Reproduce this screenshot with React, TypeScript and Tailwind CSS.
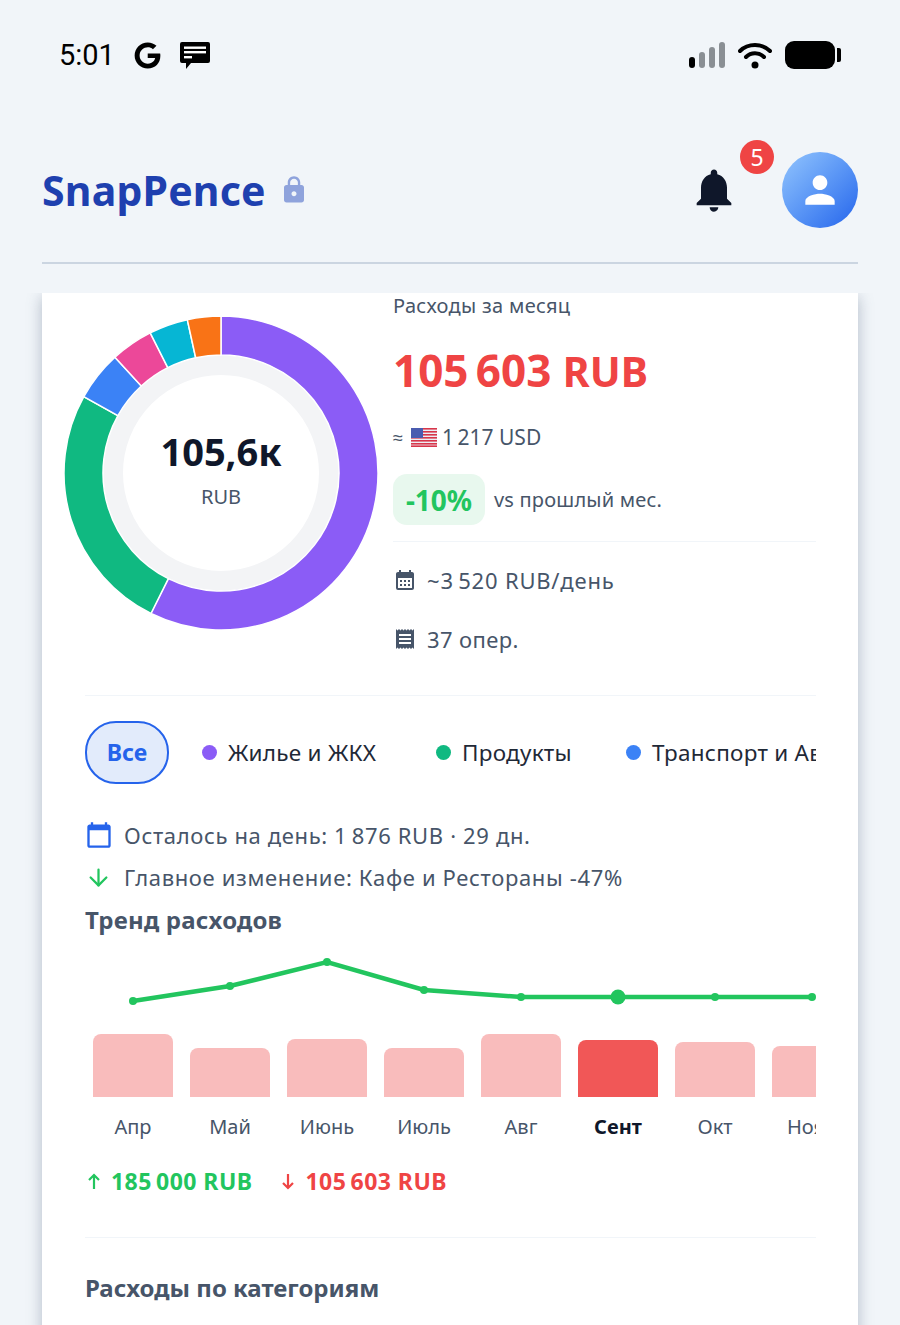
import { MdCalendarMonth, MdCalendarToday, MdLock, MdNotifications, MdPerson, MdReceipt } from "react-icons/md";
import { FaGoogle } from "react-icons/fa";
import { ArrowDown } from "lucide-react";

const segments = [
  { from: 0, to: 206.5, color: "#8b5cf6" },
  { from: 206.5, to: 299.1, color: "#10b981" },
  { from: 299.1, to: 317.5, color: "#3b82f6" },
  { from: 317.5, to: 333.2, color: "#ec4899" },
  { from: 333.2, to: 347.6, color: "#06b6d4" },
  { from: 347.6, to: 360, color: "#f97316" },
];

function polar(r: number, deg: number) {
  const a = (deg * Math.PI) / 180;
  return `${157 + r * Math.sin(a)} ${157 - r * Math.cos(a)}`;
}

function arc(from: number, to: number) {
  const large = to - from > 180 ? 1 : 0;
  return `M${polar(157, from)} A157 157 0 ${large} 1 ${polar(157, to)} L${polar(118, to)} A118 118 0 ${large} 0 ${polar(118, from)} Z`;
}

function Donut() {
  return (
    <div className="relative h-[314px] w-[314px] shrink-0">
      <svg width="314" height="314" viewBox="0 0 314 314">
        <circle cx="157" cy="157" r="108" fill="none" stroke="#f3f4f6" strokeWidth="20" />
        {segments.map((s) => (
          <path key={s.from} d={arc(s.from, s.to)} fill={s.color} stroke="#ffffff" strokeWidth="1.5" />
        ))}
      </svg>
      <div className="absolute inset-0 flex flex-col items-center justify-center pb-[8px]">
        <div className="text-[38px] font-bold leading-[44px] text-[#0f172a]">105,6к</div>
        <div className="mt-[11px] text-[20px] leading-[26px] text-[#475569]">RUB</div>
      </div>
    </div>
  );
}

function Flag() {
  return (
    <svg width="26" height="19" viewBox="0 0 26 19" className="shrink-0">
      <rect width="26" height="19" rx="2" fill="#eceef4" />
      {[0, 3, 6, 9, 12, 15, 17.4].map((y) => (
        <rect key={y} y={y} width="26" height="1.6" fill="#d8364a" />
      ))}
      <rect width="12" height="10" fill="#4a5cb0" />
    </svg>
  );
}

const months = [
  { label: "Апр", height: 63 },
  { label: "Май", height: 49 },
  { label: "Июнь", height: 58 },
  { label: "Июль", height: 49 },
  { label: "Авг", height: 63 },
  { label: "Сент", height: 57, active: true },
  { label: "Окт", height: 55 },
  { label: "Нояб", height: 51 },
];

const points: [number, number][] = [
  [48, 50],
  [145, 35],
  [242, 11],
  [339, 39],
  [436, 46],
  [533, 46],
  [630, 46],
  [727, 46],
];

function Chart() {
  return (
    <div className="overflow-hidden">
      <svg width="731" height="81" viewBox="0 0 731 81" className="block">
        <polyline points={points.map((p) => p.join(",")).join(" ")} fill="none" stroke="#22c55e" strokeWidth="4.5" />
        {points.map((p, i) => (
          <circle key={i} cx={p[0]} cy={p[1]} r={i === 5 ? 7.5 : 4} fill="#22c55e" />
        ))}
      </svg>
      <div className="flex w-[800px] gap-[17px] pl-[8px]">
        {months.map((m) => (
          <div key={m.label} className="flex w-[80px] shrink-0 flex-col items-center">
            <div className="flex h-[65px] w-full items-end">
              <div
                className={m.active ? "w-full rounded-t-[8px] bg-[#f15757]" : "w-full rounded-t-[8px] bg-[#f9bcbc]"}
                style={{ height: m.height }}
              />
            </div>
            <div className={m.active ? "mt-[17px] w-[100px] text-center text-[20px] font-bold leading-[26px] text-[#0f172a]" : "mt-[17px] w-[100px] text-center text-[20px] leading-[26px] text-[#475569]"}>
              {m.label}
            </div>
          </div>
        ))}
      </div>
    </div>
  );
}

function StatusBar() {
  return (
    <div className="flex h-[110px] shrink-0 items-center justify-between pl-[59px] pr-[59px]">
      <div className="flex items-center">
        <span className="font-['Roboto'] text-[29px] leading-none text-black">5:01</span>
        <FaGoogle className="ml-[19px] text-[27px] text-black" />
        <svg width="30" height="27" viewBox="0 0 30 27" className="ml-[19px] mt-[1px]">
          <path d="M2 0 H28 A2 2 0 0 1 30 2 V19 A2 2 0 0 1 28 21 H11 L6 27 V21 H2 A2 2 0 0 1 0 19 V2 A2 2 0 0 1 2 0 Z" fill="#000" />
          <rect x="4" y="4.5" width="22" height="2.4" fill="#fff" />
          <rect x="4" y="9" width="22" height="2.4" fill="#fff" />
          <rect x="4" y="14" width="8" height="2.4" fill="#fff" />
        </svg>
      </div>
      <div className="flex items-center">
        <svg width="36" height="26" viewBox="0 0 36 26">
          <rect x="0" y="15" width="6" height="11" rx="3" fill="#000" />
          <rect x="10" y="10" width="6" height="16" rx="3" fill="#8a8f94" />
          <rect x="20" y="5" width="6" height="21" rx="3" fill="#8a8f94" />
          <rect x="30" y="0" width="6" height="26" rx="3" fill="#8a8f94" />
        </svg>
        <svg width="34" height="27" viewBox="0 0 34 27" className="ml-[13px]">
          <path d="M2 9 C10 1 24 1 32 9" fill="none" stroke="#000" strokeWidth="4" strokeLinecap="round" />
          <path d="M8 15 C13 10 21 10 26 15" fill="none" stroke="#000" strokeWidth="4" strokeLinecap="round" />
          <circle cx="17" cy="23" r="3.5" fill="#000" />
        </svg>
        <div className="ml-[13px] h-[28px] w-[50px] rounded-[9px] bg-black" />
        <div className="ml-[2px] h-[14px] w-[4px] rounded-r-[2px] bg-black" />
      </div>
    </div>
  );
}

function Header() {
  return (
    <div className="mx-[42px] flex h-[154px] shrink-0 items-center justify-between border-b-2 border-[#cbd5e1] pt-[8px]">
      <div className="flex items-center">
        <span className="text-[41px] font-bold leading-none tracking-[0.2px] text-[#1e40af]">SnapPence</span>
        <MdLock className="ml-[13px] text-[30px] text-[#8fa3dc]" />
      </div>
      <div className="flex items-center">
        <div className="relative mr-[42px]">
          <MdNotifications className="text-[52px] text-[#0f172a]" />
          <span className="absolute -right-[34px] -top-[24px] flex h-[34px] w-[34px] items-center justify-center rounded-full bg-[#ef4444] text-[23px] leading-none text-white">5</span>
        </div>
        <div className="flex h-[76px] w-[76px] items-center justify-center rounded-full bg-gradient-to-br from-[#93c5fd] to-[#2563eb]">
          <MdPerson className="text-[44px] text-white" />
        </div>
      </div>
    </div>
  );
}

function Pill({ color, label, width }: { color: string; label: string; width: string }) {
  return (
    <div className={`flex shrink-0 items-center ${width}`}>
      <span className="mr-[11px] h-[15px] w-[15px] rounded-full" style={{ backgroundColor: color }} />
      <span className="whitespace-nowrap text-[22.5px] tracking-[0.25px] text-[#1f2937]">{label}</span>
    </div>
  );
}

function TinyArrow({ up, color }: { up?: boolean; color: string }) {
  return (
    <svg width="12" height="17" viewBox="0 0 12 17" className={up ? "" : "rotate-180"} fill="none" stroke={color} strokeWidth="2.2">
      <path d="M6 16 V2 M1 7 L6 2 L11 7" />
    </svg>
  );
}

export default function App() {
  return (
    <div className="flex h-[1325px] w-[900px] flex-col overflow-hidden bg-[#f1f5f9] font-['Noto_Sans',sans-serif]">
      <StatusBar />
      <Header />
      <div className="mt-[29px] min-h-0 flex-1 overflow-hidden">
        <div className="mx-[42px] h-[1200px] bg-white pl-[43px] pr-[42px] shadow-[0_4px_14px_rgba(100,116,139,0.45)]">
          <div className="flex h-[403px] border-b border-[#f1f5f9]">
            <div className="-ml-[21px] mr-[15px] mt-[23px]">
              <Donut />
            </div>
            <div className="flex-1">
              <div className="text-[20px] leading-[26px] tracking-[0.3px] text-[#475569]">Расходы за месяц</div>
              <div className="mt-[24px] text-[44px] font-bold leading-[54px] text-[#ef4444]">
                105{"\u202f"}603 <span className="text-[41px]">RUB</span>
              </div>
              <div className="mt-[25px] flex items-center text-[21px] leading-[28px] text-[#475569]">
                <span className="w-[12px] text-[18px]">≈</span>
                <span className="ml-[6px]"><Flag /></span>
                <span className="ml-[5px]">1{"\u202f"}217 USD</span>
              </div>
              <div className="mt-[23px] flex items-center">
                <span className="flex h-[51px] w-[92px] items-center justify-center rounded-[14px] bg-[#e8f8ee] text-[28px] font-bold text-[#22c55e]">-10%</span>
                <span className="ml-[9px] text-[20px] tracking-[0.2px] text-[#475569]">vs прошлый мес.</span>
              </div>
              <div className="mt-[16px] border-t border-[#f1f5f9] pt-[24px]">
                <div className="flex items-center text-[22px] leading-[28px] tracking-[0.8px] text-[#475569]">
                  <MdCalendarMonth className="mr-[10px] text-[24px] text-[#475569]" />
                  ~3{"\u202f"}520 RUB/день
                </div>
                <div className="mt-[31px] flex items-center text-[22px] leading-[28px] tracking-[0.4px] text-[#475569]">
                  <MdReceipt className="mr-[10px] text-[24px] text-[#475569]" />
                  37 опер.
                </div>
              </div>
            </div>
          </div>
          <div className="mt-[25px] flex items-center gap-[33px] overflow-hidden">
            <div className="flex h-[63px] w-[84px] shrink-0 items-center justify-center rounded-[31px] border-2 border-[#2563eb] bg-[#e2ebfb] text-[23px] font-bold text-[#2563eb]">Все</div>
            <Pill color="#8b5cf6" label="Жилье и ЖКХ" width="w-[201px]" />
            <Pill color="#10b981" label="Продукты" width="w-[157px]" />
            <Pill color="#3b82f6" label="Транспорт и Авто" width="w-[260px]" />
          </div>
          <div className="mt-[36px] flex items-center text-[22px] leading-[30px] tracking-[0.65px] text-[#475569]">
            <MdCalendarToday className="mr-[11px] text-[28px] text-[#2563eb]" />
            Осталось на день: 1{"\u202f"}876 RUB · 29 дн.
          </div>
          <div className="mt-[12px] flex items-center text-[22px] leading-[30px] tracking-[0.65px] text-[#475569]">
            <ArrowDown className="mr-[12px] h-[27px] w-[27px] text-[#22c55e]" />
            Главное изменение: Кафе и Рестораны -47%
          </div>
          <div className="mt-[12px] text-[24px] font-bold leading-[32px] tracking-[0.2px] text-[#475569]">Тренд расходов</div>
          <div className="mt-[15px]">
            <Chart />
          </div>
          <div className="mt-[26px] flex items-center text-[23px] font-bold leading-[30px] tracking-[0.45px]">
            <span className="ml-[3px] mr-[11px]"><TinyArrow up color="#22c55e" /></span>
            <span className="text-[#22c55e]">185{"\u202f"}000 RUB</span>
            <span className="ml-[30px] mr-[11px]"><TinyArrow color="#ef4444" /></span>
            <span className="text-[#ef4444]">105{"\u202f"}603 RUB</span>
          </div>
          <div className="mt-[41px] border-t border-[#f1f5f9] pt-[34px] text-[24px] font-bold leading-[32px] text-[#475569]">Расходы по категориям</div>
        </div>
      </div>
    </div>
  );
}
